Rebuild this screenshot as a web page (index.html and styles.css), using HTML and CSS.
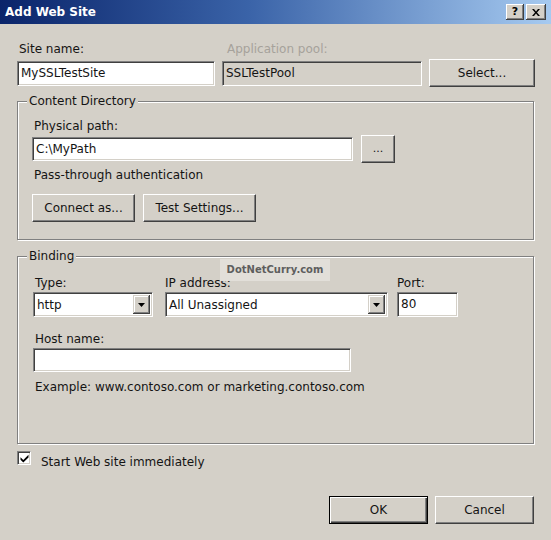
FILE: index.html
```html
<!DOCTYPE html>
<html>
<head>
<meta charset="utf-8">
<title>Add Web Site</title>
<link rel="stylesheet" href="styles.css">
</head>
<body>
<div class="dialog">
  <div class="titlebar">
    <span class="title">Add Web Site</span>
    <div class="caption-btns">
      <span class="cbtn help">?</span>
      <span class="cbtn close"><svg width="8" height="7" viewBox="0 0 8 7"><path d="M0 0h2l2 2.4L6 0h2L5 3.5 8 7H6L4 4.6 2 7H0l3-3.5z" fill="#000"/></svg></span>
    </div>
  </div>
  <div class="content">
    <div class="top-row">
      <div class="lbl">Site name:</div>
      <div class="lbl disabled">Application pool:</div>
      <div></div>
      <div class="tf site">MySSLTestSite</div>
      <div class="tf ro pool">SSLTestPool</div>
      <button class="btn select">Select...</button>
    </div>

    <fieldset class="group cdir">
      <legend>Content Directory</legend>
      <div class="lbl">Physical path:</div>
      <div class="path-row">
        <div class="tf path">C:\MyPath</div>
        <button class="btn browse">...</button>
      </div>
      <div class="lbl pass">Pass-through authentication</div>
      <div class="btn-row">
        <button class="btn connect">Connect as...</button>
        <button class="btn test">Test Settings...</button>
      </div>
    </fieldset>

    <fieldset class="group binding">
      <legend>Binding</legend>
      <div class="bind-row">
        <div class="col col-type">
          <div class="lbl">Type:</div>
          <div class="combo"><span class="combo-text">http</span><span class="drop"><svg width="7" height="4" viewBox="0 0 7 4"><path d="M0 0h7L3.5 4z" fill="#000"/></svg></span></div>
        </div>
        <div class="col col-ip">
          <div class="lbl">IP address:</div>
          <div class="combo"><span class="combo-text">All Unassigned</span><span class="drop"><svg width="7" height="4" viewBox="0 0 7 4"><path d="M0 0h7L3.5 4z" fill="#000"/></svg></span></div>
        </div>
        <div class="col col-port">
          <div class="lbl">Port:</div>
          <div class="tf port">80</div>
        </div>
      </div>
      <div class="lbl host-lbl">Host name:</div>
      <div class="tf host"></div>
      <div class="lbl example">Example: www.contoso.com or marketing.contoso.com</div>
    </fieldset>

    <div class="check-row">
      <span class="checkbox"><svg width="9" height="9" viewBox="0 0 9 9"><path d="M0.5 3.2l2.8 2.8L8.5 0.8v2.6L3.3 8.6 0.5 5.8z" fill="#000"/></svg></span>
      <span class="lbl check-lbl">Start Web site immediately</span>
    </div>

    <div class="footer">
      <button class="btn ok">OK</button>
      <button class="btn cancel">Cancel</button>
    </div>
  </div>
  <div class="watermark">DotNetCurry.com</div>
</div>
</body>
</html>
```

FILE: styles.css
```css
* { box-sizing: border-box; }
html, body { margin: 0; padding: 0; }
body {
  width: 551px;
  height: 540px;
  overflow: hidden;
  background: #d4d0c8;
  font-family: "DejaVu Sans", Tahoma, sans-serif;
  font-size: 12px;
  line-height: 14px;
  color: #141414;
}
.dialog {
  position: relative;
  width: 551px;
  height: 540px;
}

/* title bar */
.titlebar {
  height: 24px;
  display: flex;
  align-items: center;
  justify-content: space-between;
  padding: 0 5px 0 5px;
  background: linear-gradient(to right, #0a246a 0%, #3a63a8 45%, #a6caf0 100%);
}
.title {
  color: #fff;
  font-weight: bold;
  font-size: 12px;
}
.caption-btns {
  display: flex;
  gap: 2px;
}
.cbtn {
  height: 16px;
  width: 18px;
  display: flex;
  align-items: center;
  justify-content: center;
  background: #d4d0c8;
  box-shadow: inset -1px -1px #404040, inset 1px 1px #fff, inset -2px -2px #808080;
  font-weight: bold;
  font-size: 11px;
  color: #000;
}
.cbtn.close { width: 20px; }

/* content */
.content {
  padding: 0 17px 0 17px;
}
.lbl {
  padding-left: 2px;
  white-space: nowrap;
}
.lbl.disabled { color: #a6a29b; }

.top-row {
  margin-top: 18px;
  display: grid;
  grid-template-columns: 198px 200px 106px;
  column-gap: 7px;
  align-items: start;
}
.top-row .lbl.disabled { padding-left: 5px; }

/* text fields */
.tf {
  height: 24px;
  background: #fff;
  border: 1px solid;
  border-color: #808080 #fff #fff #808080;
  box-shadow: inset 1px 1px #404040, inset -1px -1px #d4d0c8;
  padding: 4px 2px 0 3px;
  white-space: nowrap;
  overflow: hidden;
}
.tf.ro { background: #d4d0c8; }
.tf.site, .tf.pool { height: 25px; margin-top: 5px; }

/* buttons */
.btn {
  font: inherit;
  color: #141414;
  background: #d4d0c8;
  border: 1px solid;
  border-color: #fff #404040 #404040 #fff;
  box-shadow: inset -1px -1px #808080, inset 1px 1px #d4d0c8;
  padding: 0;
  height: 28px;
  border-radius: 0;
}
.btn.select { margin-top: 3px; }

/* group boxes */
.group {
  margin: 0;
  border: 1px solid #808080;
  box-shadow: 1px 1px 0 #fff, inset 1px 1px 0 #fff;
  min-width: 0;
}
.group legend {
  padding: 0 2px;
  line-height: 14px;
  background: #d4d0c8;
}
.cdir {
  margin-top: 7px;
  padding: 11px 14px 17px 14px;
}
.cdir legend { margin-left: -5px; }
.path-row {
  margin-top: 2px;
  display: flex;
  align-items: center;
  gap: 8px;
}
.tf.path { width: 321px; }
.btn.browse { width: 34px; font-size: 11px; }
.pass { margin-top: 5px; }
.btn-row {
  margin-top: 12px;
  display: flex;
  gap: 8px;
}
.btn.connect { width: 103px; }
.btn.test { width: 113px; }

.binding {
  margin-top: 9px;
  padding: 13px 15px 49px 15px;
}
.binding legend { margin-left: -6px; }
.bind-row {
  display: flex;
}
.col-type { width: 120px; }
.col-ip { width: 223px; margin-left: 12px; }
.col-port { width: 61px; margin-left: 9px; }
.col-ip .lbl, .col-port .lbl { padding-left: 0; }
.combo {
  margin-top: 2px;
  height: 25px;
  background: #fff;
  border: 1px solid;
  border-color: #808080 #fff #fff #808080;
  box-shadow: inset 1px 1px #404040, inset -1px -1px #d4d0c8;
  display: flex;
  padding: 2px;
}
.combo-text {
  flex: 1;
  padding: 3px 0 0 1px;
  white-space: nowrap;
}
.drop {
  width: 17px;
  background: #d4d0c8;
  box-shadow: inset -1px -1px #404040, inset 1px 1px #d4d0c8, inset -2px -2px #808080, inset 2px 2px #fff;
  display: flex;
  align-items: center;
  justify-content: center;
}
.tf.port { margin-top: 2px; height: 25px; }
.host-lbl { margin-top: 15px; }
.tf.host { margin-top: 2px; width: 318px; }
.example { margin-top: 8px; }

/* checkbox */
.check-row {
  margin-top: 7px;
  display: flex;
  align-items: flex-start;
}
.checkbox {
  width: 14px;
  height: 14px;
  background: #fff;
  border: 1px solid;
  border-color: #808080 #fff #fff #808080;
  box-shadow: inset 1px 1px #404040, inset -1px -1px #d4d0c8;
  display: flex;
  align-items: center;
  justify-content: center;
}
.check-lbl { margin-left: 8px; margin-top: 4px; }

/* footer */
.footer {
  margin-top: 27px;
  display: flex;
  justify-content: flex-end;
  gap: 7px;
}
.btn.ok, .btn.cancel { width: 99px; }
.btn.ok {
  border-color: #000;
  box-shadow: inset 1px 1px #fff, inset -1px -1px #404040, inset -2px -2px #808080;
}

/* watermark overlay */
.watermark {
  position: absolute;
  left: 220px;
  top: 259px;
  width: 110px;
  height: 22px;
  background: #e2dfd9;
  color: #5e5e5e;
  font-weight: bold;
  font-size: 10px;
  line-height: 22px;
  text-align: center;
}
```
